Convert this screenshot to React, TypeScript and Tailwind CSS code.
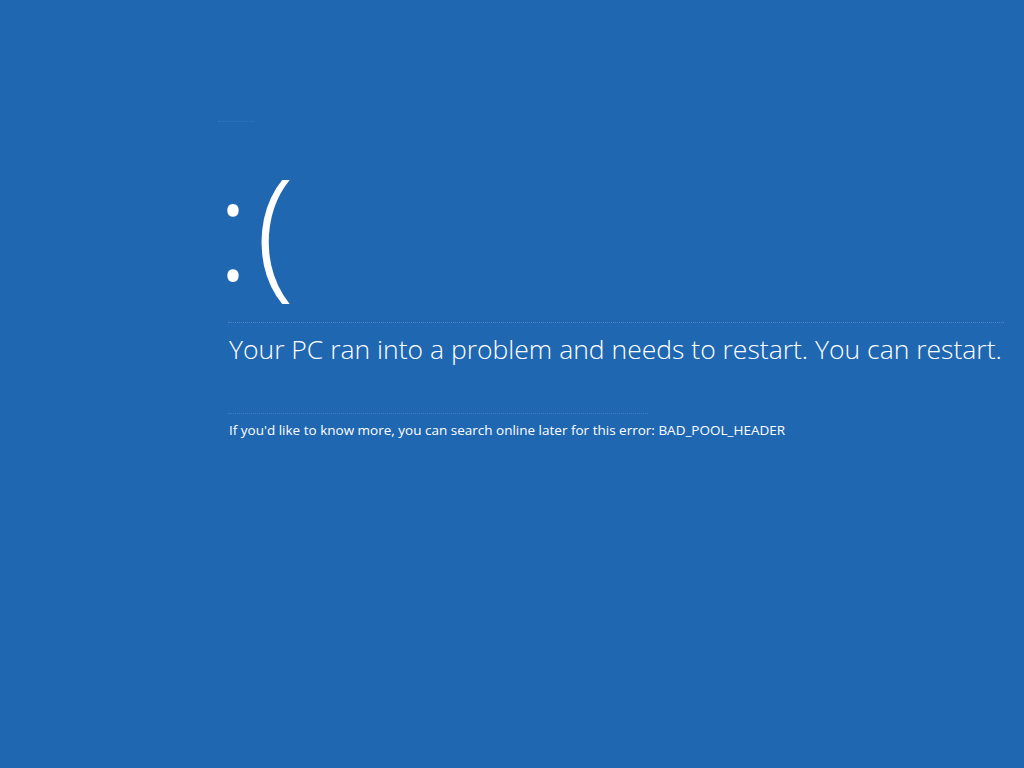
import React from 'react';

export default function App() {
  return (
    <div className="w-[1024px] h-[768px] overflow-hidden bg-[#2067b2] text-white font-['Open_Sans',sans-serif]">
      <div className="pl-[218px] pt-[121px]">
        <div className="w-[36px] border-t border-dotted border-white/10"></div>
        <div className="h-[200px] pt-[19px] -ml-[2px] text-[142px] font-light leading-[170px] tracking-[6px]">:(</div>
        <div className="ml-[10px] border-t border-dotted border-white/20 w-[776px]"></div>
        <p className="pl-[11px] pt-[6px] text-[26.5px] font-light leading-[40px] whitespace-nowrap">
          Your PC ran into a problem and needs to restart. You can restart.
        </p>
        <div className="ml-[10px] mt-[44px] border-t border-dotted border-white/15 w-[420px]"></div>
        <p className="pl-[11px] pt-[6px] text-[13.5px] leading-[20px] whitespace-nowrap">
          If you'd like to know more, you can search online later for this error: BAD_POOL_HEADER
        </p>
      </div>
    </div>
  );
}
